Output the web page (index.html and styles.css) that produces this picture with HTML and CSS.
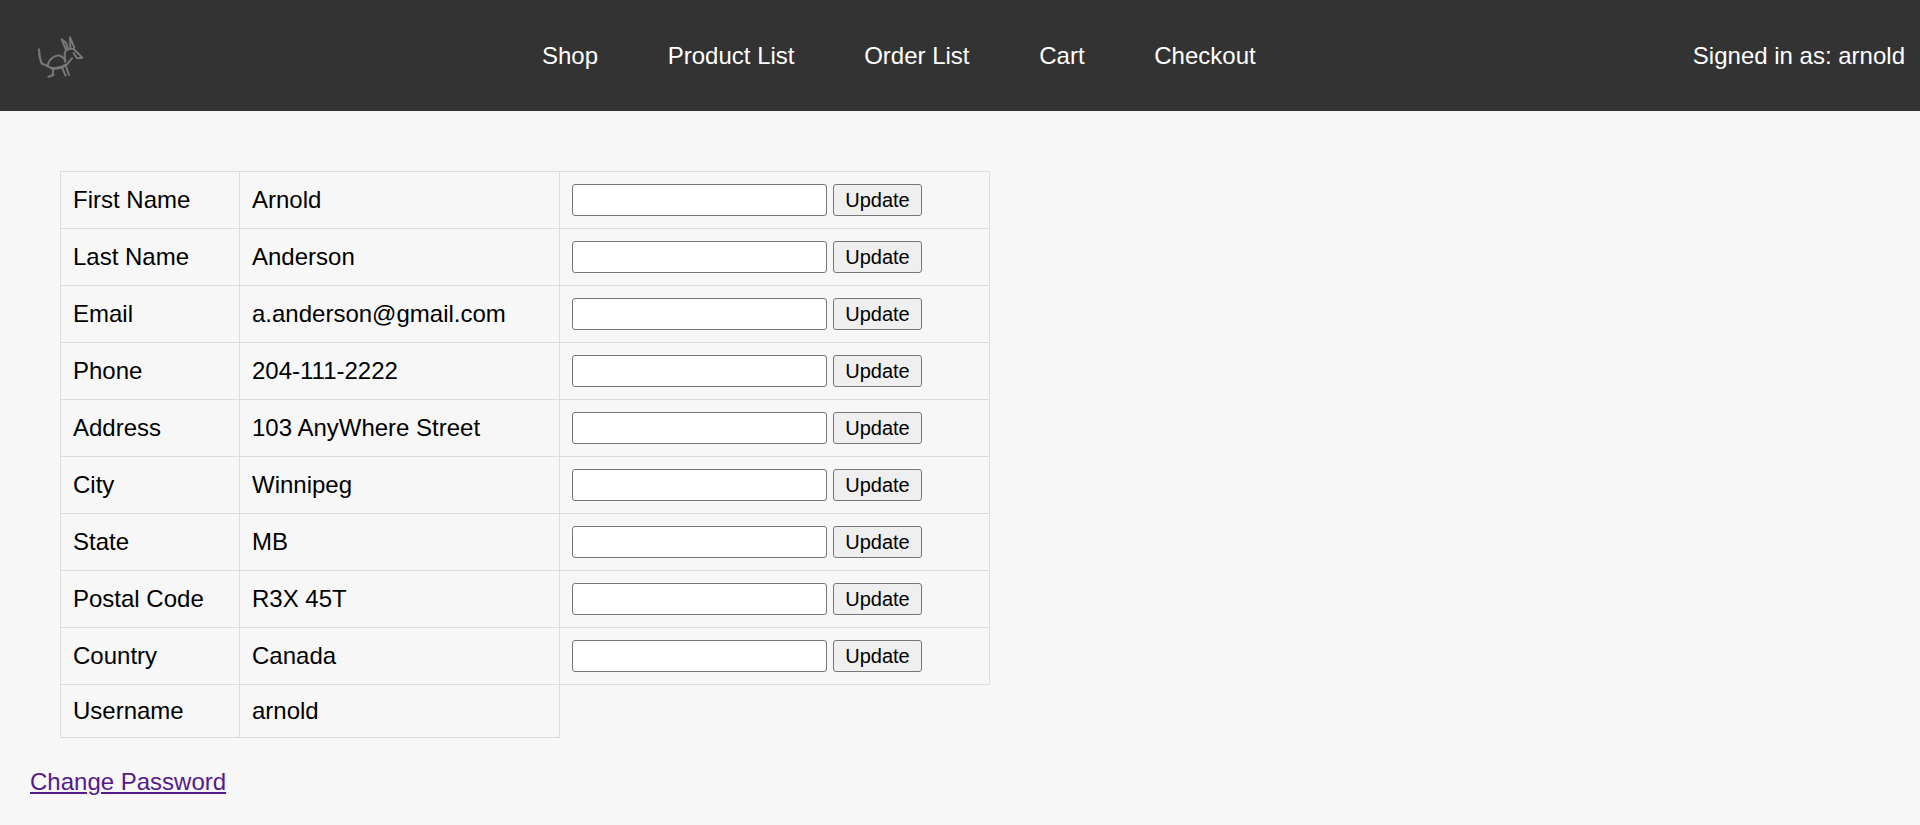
FILE: index.html
```html
<!DOCTYPE html>
<html lang="en">
<head>
<meta charset="utf-8">
<title>Account</title>
<link rel="stylesheet" href="styles.css">
</head>
<body>
<header class="topbar">
  <a class="logo" href="#" aria-label="Home">
    <svg class="logo-svg" viewBox="0 0 210 180" width="70" height="60" fill="none" stroke="#787878" stroke-width="6" stroke-linejoin="round" stroke-linecap="round">
      <path d="M42 73 L45 100 L50 116 L43 92 Z"/>
      <path d="M50 115 L68 123"/>
      <path d="M68 122 C71 102 88 90 104 92 C113 95 119 102 122 108"/>
      <path d="M68 124 C85 134 110 130 126 118 L141 100"/>
      <path d="M80 130 C95 132 110 128 122 120" stroke-width="8"/>
      <path d="M120 110 L119 84 C122 74 134 70 146 72 L172 98 L156 100 L146 84"/>
      <path d="M122 72 L110 43 L124 54 L128 70"/>
      <path d="M136 70 L135 37 L148 68"/>
      <path d="M112 130 L122 152"/>
      <path d="M123 124 L132 150"/>
      <path d="M86 130 L82 152 L70 155 L86 150"/>
    </svg>
  </a>
  <nav class="nav">
    <a href="#">Shop</a>
    <a href="#">Product List</a>
    <a href="#">Order List</a>
    <a href="#">Cart</a>
    <a href="#">Checkout</a>
  </nav>
  <div class="user">Signed in as: arnold</div>
</header>
<main class="content">
  <table class="profile">
    <tr><td class="c-label">First Name</td><td class="c-value">Arnold</td><td class="c-edit"><div class="edit"><input type="text"><button type="button">Update</button></div></td></tr>
    <tr><td class="c-label">Last Name</td><td class="c-value">Anderson</td><td class="c-edit"><div class="edit"><input type="text"><button type="button">Update</button></div></td></tr>
    <tr><td class="c-label">Email</td><td class="c-value">a.anderson@gmail.com</td><td class="c-edit"><div class="edit"><input type="text"><button type="button">Update</button></div></td></tr>
    <tr><td class="c-label">Phone</td><td class="c-value">204-111-2222</td><td class="c-edit"><div class="edit"><input type="text"><button type="button">Update</button></div></td></tr>
    <tr><td class="c-label">Address</td><td class="c-value">103 AnyWhere Street</td><td class="c-edit"><div class="edit"><input type="text"><button type="button">Update</button></div></td></tr>
    <tr><td class="c-label">City</td><td class="c-value">Winnipeg</td><td class="c-edit"><div class="edit"><input type="text"><button type="button">Update</button></div></td></tr>
    <tr><td class="c-label">State</td><td class="c-value">MB</td><td class="c-edit"><div class="edit"><input type="text"><button type="button">Update</button></div></td></tr>
    <tr><td class="c-label">Postal Code</td><td class="c-value">R3X 45T</td><td class="c-edit"><div class="edit"><input type="text"><button type="button">Update</button></div></td></tr>
    <tr><td class="c-label">Country</td><td class="c-value">Canada</td><td class="c-edit"><div class="edit"><input type="text"><button type="button">Update</button></div></td></tr>
    <tr><td class="c-label">Username</td><td class="c-value">arnold</td></tr>
  </table>
  <p class="change"><a href="#">Change Password</a></p>
</main>
</body>
</html>
```
FILE: styles.css
```css
html, body {
  margin: 0;
  padding: 0;
}
body {
  background: #f7f7f7;
  color: #000;
  font-family: "Liberation Sans", Arial, sans-serif;
  font-size: 24px;
}
.topbar {
  display: flex;
  align-items: center;
  height: 111px;
  background: #333;
  color: #fff;
  padding: 0 15px 0 25px;
}
.logo {
  display: block;
  height: 60px;
  margin-top: -1px;
  flex: 0 0 70px;
}
.logo-svg {
  display: block;
}
.nav {
  display: flex;
  gap: 69.7px;
  margin-left: 447px;
  flex: 1;
}
.nav a {
  color: #fff;
  text-decoration: none;
}
.user {
  white-space: nowrap;
}
.content {
  padding: 60px 30px 0;
}
.profile {
  border-collapse: collapse;
  margin-left: 30px;
}
.profile td {
  border: 1px solid #ddd;
  padding: 12px;
}
.c-label {
  width: 154px;
}
.c-value {
  width: 295px;
}
.c-edit {
  width: 405px;
}
.edit {
  display: flex;
  gap: 6px;
}
input {
  box-sizing: border-box;
  width: 255px;
  height: 32px;
  padding: 1px 2px;
  background: #fff;
  border: 1px solid #767676;
  border-radius: 3px;
  font-size: 20px;
  font-family: inherit;
}
button {
  box-sizing: border-box;
  width: 89px;
  height: 32px;
  padding: 0;
  background: #efefef;
  color: #000;
  border: 1px solid #767676;
  border-radius: 3px;
  font-size: 20px;
  font-family: inherit;
}
.change {
  margin: 30px 0 0;
}
.change a {
  color: #551a8b;
}
```
